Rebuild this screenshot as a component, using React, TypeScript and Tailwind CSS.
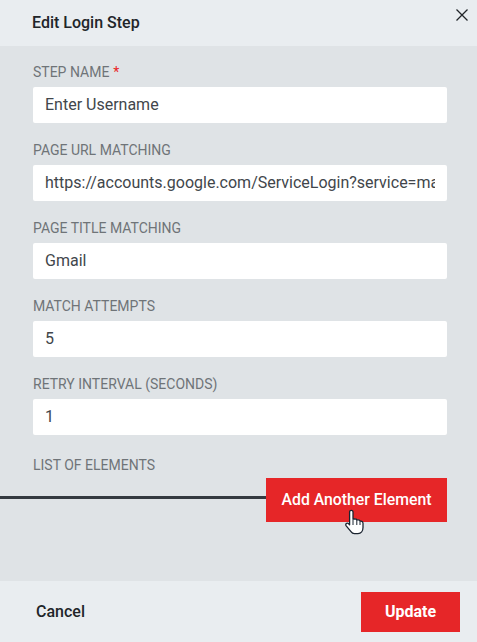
const fields = [
  { label: "PAGE URL MATCHING", value: "https://accounts.google.com/ServiceLogin?service=mail" },
  { label: "PAGE TITLE MATCHING", value: "Gmail" },
  { label: "MATCH ATTEMPTS", value: "5" },
  { label: "RETRY INTERVAL (SECONDS)", value: "1" },
];

function Field({ label, value, required }: { label: string; value: string; required?: boolean }) {
  return (
    <div className="h-[78px] flex flex-col">
      <div className="h-[20px] mb-[5px] flex items-center text-[14px] leading-[20px] text-[#6f7478]">
        {label}
        {required && <span className="text-[#e92727] ml-1">*</span>}
      </div>
      <input
        readOnly
        value={value}
        className="h-[36px] w-full bg-white rounded-[2px] pl-[12px] pr-[12px] pb-[2px] text-[16px] text-[#41464b] outline-none"
        style={{ fontFamily: "Roboto, sans-serif" }}
      />
    </div>
  );
}

export default function App() {
  return (
    <div className="relative w-[477px] h-[642px] flex flex-col overflow-hidden bg-[#dfe3e6] font-['Roboto',sans-serif]">
      <div className="h-[46px] shrink-0 bg-[#e9edf0] pl-[32px] flex items-center text-[16px] font-medium text-[#212529]">
        Edit Login Step
      </div>
      <button className="absolute top-[8px] right-[8px] text-[#212529]">
        <svg width="14" height="14" viewBox="0 0 14 14" fill="none" stroke="currentColor" strokeWidth="1.3">
          <path d="M1.5 1.5 L12.5 12.5 M12.5 1.5 L1.5 12.5" />
        </svg>
      </button>
      <div className="flex-1 pl-[33px] pr-[30px] pt-[16px] relative">
        <Field label="STEP NAME" value="Enter Username" required />
        {fields.map((f) => (
          <Field key={f.label} label={f.label} value={f.value} />
        ))}
        <div className="h-[20px] mt-[3px] flex items-center text-[14px] text-[#6f7478]">LIST OF ELEMENTS</div>
        <div className="-ml-[33px] mt-[3px] flex items-start">
          <div className="flex-1 h-[3px] bg-[#343a40] mt-[18px]" />
          <button className="w-[181px] h-[44px] bg-[#e62628] text-white text-[15.8px] font-medium">
            Add Another Element
          </button>
        </div>
      </div>
      <div className="h-[61px] shrink-0 bg-[#e9edf0] flex items-center justify-between pl-[36px] pr-[17px]">
        <span className="text-[16px] font-medium text-[#212529]">Cancel</span>
        <button className="w-[99px] h-[40px] bg-[#e62628] text-white text-[16px] font-bold">Update</button>
      </div>
      <svg className="absolute left-[345px] top-[509px]" width="20" height="26" viewBox="0 0 20 26">
        <path
          d="M4.6 3 C4.6 0.8 8 0.8 8 3 L8 10 L10 9.8 C11 9.8 11.6 10.2 11.8 10.8 L13.4 10.8 C14.4 10.8 14.9 11.4 15 12 L16.2 12.2 C17.4 12.4 18 13.2 18 14.2 L18 18.5 C18 22 16 24.6 13 24.6 L9.4 24.6 C7.8 24.6 6.8 23.8 6 22.6 L1.2 16.8 C0 15 2 13.4 3.4 14.6 L4.6 15.8 Z"
          fill="white"
          stroke="#1b2430"
          strokeWidth="1.3"
          strokeLinejoin="round"
        />
        <path d="M8 10.5 V16 M11.8 11 V16 M15 12.2 V16" stroke="#1b2430" strokeWidth="1" fill="none" />
      </svg>
    </div>
  );
}
